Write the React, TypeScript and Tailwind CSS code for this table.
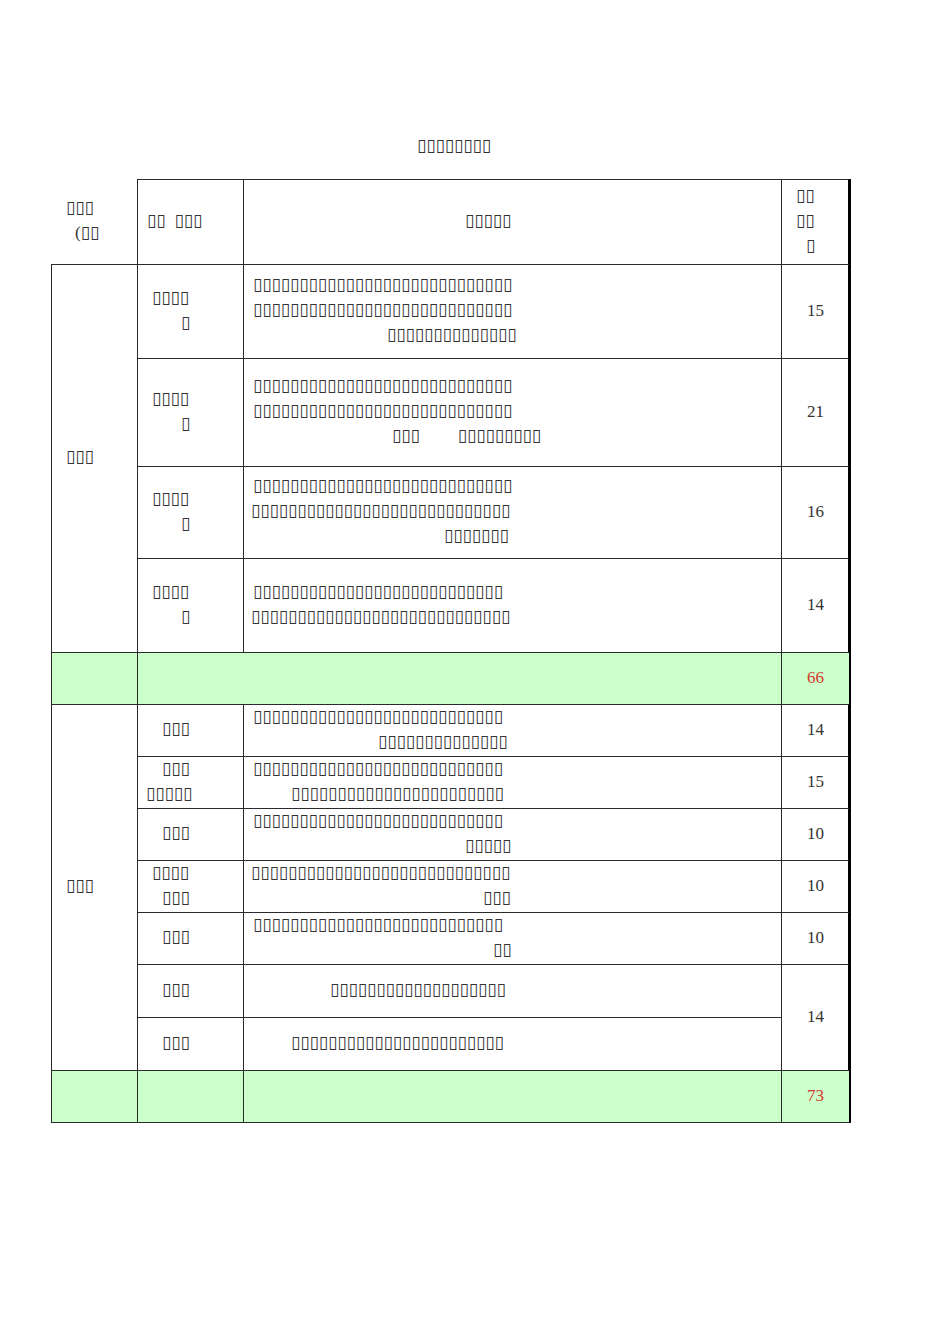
import React from "react";

const B = "\u25AF";
const t = (n: number) => B.repeat(n);

const box = "font-['DejaVu_Sans'] text-[17px] tracking-[-0.1px] text-[#333] whitespace-pre leading-[25px]";
const num = "font-['Liberation_Serif'] text-[17px] text-[#333] text-center relative top-[1px]";
const red = "font-['Liberation_Serif'] text-[17px] text-[#d23a2a] text-center relative top-[1px]";
const cell = "border-l border-t border-[#2a2a2a] flex flex-col justify-center pb-[4px]";

export default function App() {
  return (
    <div className="w-[950px] h-[1344px] bg-white relative">
      <div className="pt-[133px] pl-[417px]">
        <div className={box}>{t(8)}</div>
      </div>
      <div className="ml-[51px] mt-[21px] w-[800px] grid grid-cols-[86px_106px_538px_68px] grid-rows-[85px_94px_108px_92px_94px_52px_52px_52px_52px_52px_52px_53px_53px_52px] border-r-[3px] border-r-black border-b border-b-[#2a2a2a]">
        {/* header */}
        <div className="flex flex-col justify-center pb-[4px]">
          <div className={box + " pl-[15px]"}>{t(3)}</div>
          <div className={box + " pl-[24px]"}><span className="font-['Liberation_Serif'] tracking-normal">(</span>{t(2)}</div>
        </div>
        <div className={cell}>
          <div className={box + " pl-[9px]"}>{t(2)}<span className="ml-[9px]">{t(3)}</span></div>
        </div>
        <div className={cell}>
          <div className={box + " pl-[221px]"}>{t(5)}</div>
        </div>
        <div className={cell}>
          <div className={box + " pl-[14px]"}>{t(2)}</div>
          <div className={box + " pl-[14px]"}>{t(2)}</div>
          <div className={box + " pl-[24px]"}>{t(1)}</div>
        </div>

        {/* section 1 */}
        <div className={cell + " row-span-4"}>
          <div className={box + " pl-[14px]"}>{t(3)}</div>
        </div>
        {/* r1 */}
        <div className={cell}>
          <div className={box + " pl-[14px]"}>{t(4)}</div>
          <div className={box + " pl-[43px]"}>{t(1)}</div>
        </div>
        <div className={cell}>
          <div className={box + " pl-[9px]"}>{t(28)}</div>
          <div className={box + " pl-[9px]"}>{t(28)}</div>
          <div className={box + " pl-[143px]"}>{t(14)}</div>
        </div>
        <div className={cell}><div className={num}>15</div></div>
        {/* r2 */}
        <div className={cell}>
          <div className={box + " pl-[14px]"}>{t(4)}</div>
          <div className={box + " pl-[43px]"}>{t(1)}</div>
        </div>
        <div className={cell}>
          <div className={box + " pl-[9px]"}>{t(28)}</div>
          <div className={box + " pl-[9px]"}>{t(28)}</div>
          <div className={box + " pl-[148px]"}>{t(3)}<span className="ml-[38px]">{t(9)}</span></div>
        </div>
        <div className={cell}><div className={num}>21</div></div>
        {/* r3 */}
        <div className={cell}>
          <div className={box + " pl-[14px]"}>{t(4)}</div>
          <div className={box + " pl-[43px]"}>{t(1)}</div>
        </div>
        <div className={cell}>
          <div className={box + " pl-[9px]"}>{t(28)}</div>
          <div className={box + " pl-[7px]"}>{t(28)}</div>
          <div className={box + " pl-[200px]"}>{t(7)}</div>
        </div>
        <div className={cell}><div className={num}>16</div></div>
        {/* r4 */}
        <div className={cell}>
          <div className={box + " pl-[14px]"}>{t(4)}</div>
          <div className={box + " pl-[43px]"}>{t(1)}</div>
        </div>
        <div className={cell}>
          <div className={box + " pl-[9px]"}>{t(27)}</div>
          <div className={box + " pl-[7px]"}>{t(28)}</div>
        </div>
        <div className={cell}><div className={num}>14</div></div>

        {/* green 1 */}
        <div className={cell + " bg-[#ccffcc]"}></div>
        <div className={cell + " col-span-2 bg-[#ccffcc]"}></div>
        <div className={cell + " bg-[#ccffcc]"}><div className={red}>66</div></div>

        {/* section 2 */}
        <div className={cell + " row-span-7"}>
          <div className={box + " pl-[14px]"}>{t(3)}</div>
        </div>
        {/* r5 */}
        <div className={cell}><div className={box + " pl-[24px]"}>{t(3)}</div></div>
        <div className={cell}>
          <div className={box + " pl-[9px]"}>{t(27)}</div>
          <div className={box + " pl-[134px]"}>{t(14)}</div>
        </div>
        <div className={cell}><div className={num}>14</div></div>
        {/* r6 */}
        <div className={cell}>
          <div className={box + " pl-[24px]"}>{t(3)}</div>
          <div className={box + " pl-[8px]"}>{t(5)}</div>
        </div>
        <div className={cell}>
          <div className={box + " pl-[9px]"}>{t(27)}</div>
          <div className={box + " pl-[47px]"}>{t(23)}</div>
        </div>
        <div className={cell}><div className={num}>15</div></div>
        {/* r7 */}
        <div className={cell}><div className={box + " pl-[24px]"}>{t(3)}</div></div>
        <div className={cell}>
          <div className={box + " pl-[9px]"}>{t(27)}</div>
          <div className={box + " pl-[221px]"}>{t(5)}</div>
        </div>
        <div className={cell}><div className={num}>10</div></div>
        {/* r8 */}
        <div className={cell}>
          <div className={box + " pl-[14px]"}>{t(4)}</div>
          <div className={box + " pl-[24px]"}>{t(3)}</div>
        </div>
        <div className={cell}>
          <div className={box + " pl-[7px]"}>{t(28)}</div>
          <div className={box + " pl-[239px]"}>{t(3)}</div>
        </div>
        <div className={cell}><div className={num}>10</div></div>
        {/* r9 */}
        <div className={cell}><div className={box + " pl-[24px]"}>{t(3)}</div></div>
        <div className={cell}>
          <div className={box + " pl-[9px]"}>{t(27)}</div>
          <div className={box + " pl-[249px]"}>{t(2)}</div>
        </div>
        <div className={cell}><div className={num}>10</div></div>
        {/* r10 */}
        <div className={cell}><div className={box + " pl-[24px]"}>{t(3)}</div></div>
        <div className={cell}>
          <div className={box + " pl-[86px]"}>{t(19)}</div>
        </div>
        <div className={cell + " row-span-2"}><div className={num}>14</div></div>
        {/* r11 */}
        <div className={cell}><div className={box + " pl-[24px]"}>{t(3)}</div></div>
        <div className={cell}>
          <div className={box + " pl-[47px]"}>{t(23)}</div>
        </div>

        {/* green 2 */}
        <div className={cell + " bg-[#ccffcc]"}></div>
        <div className={cell + " bg-[#ccffcc]"}></div>
        <div className={cell + " bg-[#ccffcc]"}></div>
        <div className={cell + " bg-[#ccffcc]"}><div className={red}>73</div></div>
      </div>
    </div>
  );
}
